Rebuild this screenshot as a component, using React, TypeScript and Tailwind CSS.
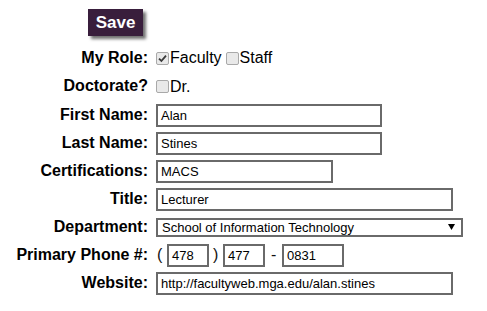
import React from "react";

const font = { fontFamily: '"Liberation Sans", Arial, sans-serif' };

function Box({ checked }: { checked?: boolean }) {
  return (
    <span className="inline-flex items-center justify-center w-[13px] h-[13px] rounded-[2px] border border-[#a9a9a9] bg-[#e9e9e9] shrink-0">
      {checked && (
        <svg width="9" height="9" viewBox="0 0 9 9">
          <path d="M1 4.6 L3.4 7 L8 1.6" stroke="#3a3a3a" strokeWidth="1.8" fill="none" />
        </svg>
      )}
    </span>
  );
}

function Label({ children }: { children: React.ReactNode }) {
  return (
    <div className="w-[148px] text-right font-bold text-[16px] leading-[18px] text-black shrink-0 mt-[-1px]">
      {children}
    </div>
  );
}

function Input({ value, w }: { value: string; w: string }) {
  return (
    <div
      className={`${w} h-[23px] border-2 border-[#6a6a6a] bg-white flex items-center pl-[3px] text-[13px] text-black leading-none whitespace-nowrap overflow-hidden shrink-0`}
    >
      {value}
    </div>
  );
}

export default function App() {
  return (
    <div className="w-[487px] h-[311px] bg-white text-black" style={font}>
      <div className="h-[44px] pt-[9px] pl-[88px]">
        <div className="w-[55px] h-[27px] bg-[#391e3c] text-white font-bold text-[17px] flex items-center justify-center shadow-[3px_3px_3px_#707070]">
          Save
        </div>
      </div>
      <div className="flex items-center h-[28px] gap-[8px]">
        <Label>My Role:</Label>
        <div className="flex items-center text-[16px] leading-[18px]">
          <Box checked />
          <span className="ml-[1px]">Faculty</span>
          <span className="ml-[4px] flex"><Box /></span>
          <span className="ml-[1px]">Staff</span>
        </div>
      </div>
      <div className="flex items-center h-[29px] gap-[8px]">
        <Label>Doctorate?</Label>
        <div className="flex items-center text-[16px] leading-[18px]">
          <Box />
          <span className="ml-[1px]">Dr.</span>
        </div>
      </div>
      <div className="flex items-center h-[28px] gap-[8px]">
        <Label>First Name:</Label>
        <Input value="Alan" w="w-[226px]" />
      </div>
      <div className="flex items-center h-[28px] gap-[8px]">
        <Label>Last Name:</Label>
        <Input value="Stines" w="w-[226px]" />
      </div>
      <div className="flex items-center h-[28px] gap-[8px]">
        <Label>Certifications:</Label>
        <Input value="MACS" w="w-[177px]" />
      </div>
      <div className="flex items-center h-[28px] gap-[8px]">
        <Label>Title:</Label>
        <Input value="Lecturer" w="w-[297px]" />
      </div>
      <div className="flex items-center h-[28px] gap-[8px]">
        <Label>Department:</Label>
        <div className="w-[307px] h-[19px] border-2 border-[#6a6a6a] bg-white flex items-center pl-[4px] pr-[6px] text-[13px] leading-none text-black">
          <span className="flex-1 whitespace-nowrap">School of Information Technology</span>
          <svg width="7" height="6" viewBox="0 0 7 6">
            <path d="M0 0 H7 L3.5 6 Z" fill="#000" />
          </svg>
        </div>
      </div>
      <div className="flex items-center h-[28px] gap-[8px]">
        <Label>Primary Phone #:</Label>
        <div className="flex items-center text-[16px] leading-[18px] text-[#111]">
          <span className="ml-[1px] w-[10px]">(</span>
          <Input value="478" w="w-[42px]" />
          <span className="ml-[4px] w-[10px]">)</span>
          <Input value="477" w="w-[42px]" />
          <span className="ml-[6px] w-[11px]">-</span>
          <Input value="0831" w="w-[62px]" />
        </div>
      </div>
      <div className="flex items-center h-[28px] gap-[8px]">
        <Label>Website:</Label>
        <Input value="http://facultyweb.mga.edu/alan.stines" w="w-[297px]" />
      </div>
    </div>
  );
}
